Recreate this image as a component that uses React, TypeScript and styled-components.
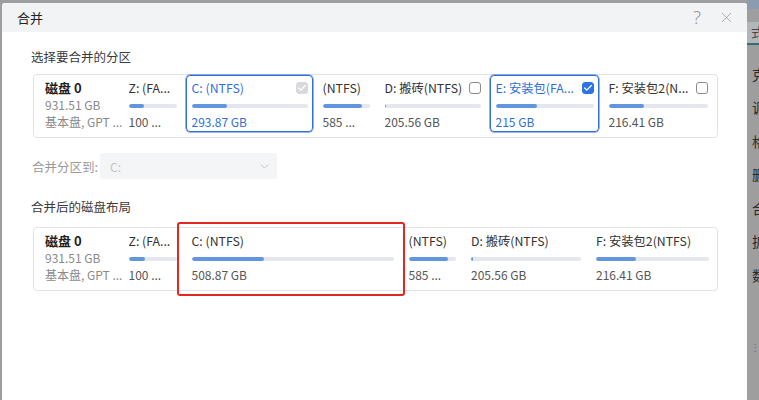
import styled, { createGlobalStyle } from 'styled-components'
import { ChevronDown, X, Check } from 'lucide-react'

const GlobalStyle = createGlobalStyle`
  html, body {
    margin: 0;
    padding: 0;
  }
  body {
    background: #9e9e9e;
    font-family: 'Noto Sans CJK SC', 'Noto Sans', sans-serif;
    overflow: hidden;
  }
  * {
    box-sizing: border-box;
  }
`

const Page = styled.div`
  display: flex;
  height: 400px;
  padding: 3px 0 0 2px;
`

const Dialog = styled.div`
  width: 745px;
  height: 397px;
  background: #fff;
  border-radius: 3px 3px 0 0;
  display: flex;
  flex-direction: column;
  overflow: hidden;
`

const TitleBar = styled.div`
  height: 29px;
  flex-shrink: 0;
  background: #f2f3f5;
  display: flex;
  align-items: center;
  justify-content: space-between;
  padding: 0 12px 0 15px;
`

const Title = styled.span`
  font-size: 13px;
  color: #222;
`

const TitleActions = styled.div`
  display: flex;
  align-items: center;
  gap: 17px;
  color: #9a9a9a;
`

const Help = styled.span`
  font-family: 'Noto Sans', sans-serif;
  font-size: 19px;
  font-weight: 300;
  line-height: 1;
`

const Body = styled.div`
  padding: 16px 29px 0 29px;
  display: flex;
  flex-direction: column;
`

const SectionLabel = styled.div<{ $gap: number }>`
  font-size: 12.5px;
  line-height: 18px;
  color: #3a3a3a;
  margin-bottom: ${({ $gap }) => $gap}px;
`

const DiskBox = styled.div`
  width: 685px;
  height: 64px;
  margin-left: 2px;
  border: 1px solid #e2e3e6;
  border-radius: 4px;
  padding: 0 4px 5px 0;
  display: flex;
  gap: 4px;
`

const DiskInfo = styled.div`
  width: 85px;
  padding: 4px 0 0 11px;
  display: flex;
  flex-direction: column;
  line-height: 17px;
  white-space: nowrap;
`

const DiskName = styled.span`
  font-size: 13px;
  font-weight: 700;
  color: #1f1f1f;
`

const DiskMeta = styled.span`
  font-size: 12px;
  color: #8a8a8a;
`

const Card = styled.div<{ $selected?: boolean }>`
  position: relative;
  height: 57px;
  flex-shrink: 0;
  border: 1px solid ${({ $selected }) => ($selected ? '#2f6fdb' : 'transparent')};
  box-shadow: ${({ $selected }) => ($selected ? '0 0 0 0.5px #2f6fdb' : 'none')};
  border-radius: 4px;
  padding: 3.5px 4.5px 0;
  display: flex;
  flex-direction: column;
`

const Highlight = styled.div`
  position: absolute;
  left: -10px;
  right: -7px;
  top: -7px;
  bottom: -12px;
  border: 2px solid #e3281f;
  border-radius: 3px;
  pointer-events: none;
`

const CardHead = styled.div`
  height: 17px;
  display: flex;
  align-items: center;
  justify-content: space-between;
  gap: 4px;
`

const PartName = styled.span<{ $selected?: boolean }>`
  font-size: 12.3px;
  line-height: 17px;
  color: ${({ $selected }) => ($selected ? '#2f6fdb' : '#333')};
  white-space: nowrap;
  overflow: hidden;
`

const Box = styled.span<{ $state: 'on' | 'off' | 'disabled' }>`
  width: 12px;
  height: 12px;
  flex-shrink: 0;
  border-radius: 3px;
  display: flex;
  align-items: center;
  justify-content: center;
  color: #fff;
  background: ${({ $state }) =>
    $state === 'on' ? '#2e72e8' : $state === 'disabled' ? '#d8d9dc' : '#fff'};
  border: 1px solid
    ${({ $state }) =>
      $state === 'on' ? '#2e72e8' : $state === 'disabled' ? '#d8d9dc' : '#8c8c8c'};
`

const Track = styled.div`
  height: 4px;
  margin-top: 7px;
  border-radius: 2px;
  background: #e4e7ee;
  overflow: hidden;
`

const Fill = styled.div`
  height: 100%;
  min-width: 1.5px;
  border-radius: 2px;
  background: #6195dd;
`

const PartSize = styled.span<{ $selected?: boolean }>`
  margin-top: 5px;
  font-size: 12px;
  line-height: 17px;
  color: ${({ $selected }) => ($selected ? '#2f6fdb' : '#555')};
  white-space: nowrap;
  overflow: hidden;
`

const TargetRow = styled.div`
  display: flex;
  align-items: center;
  height: 26px;
  margin: 15px 0 19px;
`

const TargetLabel = styled.span`
  width: 69px;
  padding-left: 1px;
  font-size: 12.5px;
  color: #9a9a9a;
`

const Select = styled.div`
  width: 177px;
  height: 26px;
  border-radius: 3px;
  background: #f4f5f7;
  display: flex;
  align-items: center;
  justify-content: space-between;
  padding: 0 6px 0 10px;
  font-size: 12px;
  color: #c4c4c4;
`

const Backdrop = styled.div`
  flex: 1;
  overflow: hidden;
  display: flex;
  flex-direction: column;
  margin-top: -3px;
`

const BackTab = styled.div`
  height: 45px;
  padding: 22px 0 0 4px;
  margin-bottom: 12px;
  font-size: 13px;
  color: #445;
  background: linear-gradient(#8b9bb0 0 9px, #9e9e9e 9px 22px, #b3b6b8 22px);
  border-bottom: 2px solid #2d6f73;
`

const BackItem = styled.div`
  height: 33.5px;
  display: flex;
  align-items: center;
  padding-left: 5px;
  font-size: 14px;
  color: #2a2a2a;
  white-space: nowrap;
`

const Dots = styled.div`
  margin: 50px 0 0 3px;
  color: #4a6fb0;
  font-size: 10px;
  line-height: 1;
`

type Part = {
  title: string
  size: string
  w: number
  pct: number
  selected?: boolean
  check?: 'on' | 'off' | 'disabled'
  mark?: boolean
}

const before: Part[] = [
  { title: 'Z: (FA...', size: '100 ...', w: 59, pct: 33 },
  { title: 'C: (NTFS)', size: '293.87 GB', w: 127, pct: 31, selected: true, check: 'disabled' },
  { title: '(NTFS)', size: '585 ...', w: 58, pct: 84 },
  { title: 'D: 搬砖(NTFS)', size: '205.56 GB', w: 107, pct: 1.5, check: 'off' },
  { title: 'E: 安装包(FA...', size: '215 GB', w: 109, pct: 42, selected: true, check: 'on' },
  { title: 'F: 安装包2(N...', size: '216.41 GB', w: 110, pct: 36, check: 'off' },
]

const after: Part[] = [
  { title: 'Z: (FA...', size: '100 ...', w: 59, pct: 34 },
  { title: 'C: (NTFS)', size: '508.87 GB', w: 213, pct: 36, mark: true },
  { title: '(NTFS)', size: '585 ...', w: 58.5, pct: 84 },
  { title: 'D: 搬砖(NTFS)', size: '205.56 GB', w: 121, pct: 1.5 },
  { title: 'F: 安装包2(NTFS)', size: '216.41 GB', w: 124, pct: 35 },
]

function Disk({ parts }: { parts: Part[] }) {
  return (
    <DiskBox>
      <DiskInfo>
        <DiskName>磁盘 0</DiskName>
        <DiskMeta>931.51 GB</DiskMeta>
        <DiskMeta>基本盘, GPT ...</DiskMeta>
      </DiskInfo>
      {parts.map((p) => (
        <Card key={p.title} $selected={p.selected} style={{ width: p.w }}>
          {p.mark && <Highlight />}
          <CardHead>
            <PartName $selected={p.selected}>{p.title}</PartName>
            {p.check && (
              <Box $state={p.check}>
                {p.check !== 'off' && <Check size={10} strokeWidth={3} />}
              </Box>
            )}
          </CardHead>
          <Track>
            <Fill style={{ width: `${p.pct}%` }} />
          </Track>
          <PartSize $selected={p.selected}>{p.size}</PartSize>
        </Card>
      ))}
    </DiskBox>
  )
}

export default function App() {
  return (
    <>
      <GlobalStyle />
      <Page>
        <Dialog>
          <TitleBar>
            <Title>合并</Title>
            <TitleActions>
              <Help>?</Help>
              <X size={17} strokeWidth={1.1} />
            </TitleActions>
          </TitleBar>
          <Body>
            <SectionLabel $gap={8}>选择要合并的分区</SectionLabel>
            <Disk parts={before} />
            <TargetRow>
              <TargetLabel>合并分区到:</TargetLabel>
              <Select>
                C:
                <ChevronDown size={13} strokeWidth={1.5} color="#bdbdbd" />
              </Select>
            </TargetRow>
            <SectionLabel $gap={11}>合并后的磁盘布局</SectionLabel>
            <Disk parts={after} />
          </Body>
        </Dialog>
        <Backdrop>
          <BackTab>式</BackTab>
          {['克', '调', '格', '删', '合', '扩', '数'].map((c) => (
            <BackItem key={c}>{c}</BackItem>
          ))}
          <Dots>⋮</Dots>
        </Backdrop>
      </Page>
    </>
  )
}
